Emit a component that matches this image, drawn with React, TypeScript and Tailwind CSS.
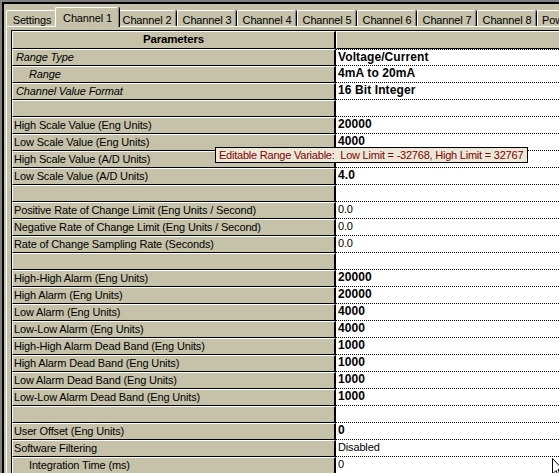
import React from 'react';

type Row = { label: string; value?: string; bold?: boolean; italic?: boolean; indent?: boolean };

const rows: Row[] = [
  { label: 'Range Type', value: 'Voltage/Current', bold: true, italic: true },
  { label: 'Range', value: '4mA to 20mA', bold: true, italic: true, indent: true },
  { label: 'Channel Value Format', value: '16 Bit Integer', bold: true, italic: true },
  { label: '' },
  { label: 'High Scale Value (Eng Units)', value: '20000', bold: true },
  { label: 'Low Scale Value (Eng Units)', value: '4000', bold: true },
  { label: 'High Scale Value (A/D Units)', value: '20.0', bold: true },
  { label: 'Low Scale Value (A/D Units)', value: '4.0', bold: true },
  { label: '' },
  { label: 'Positive Rate of Change Limit (Eng Units / Second)', value: '0.0' },
  { label: 'Negative Rate of Change Limit (Eng Units / Second)', value: '0.0' },
  { label: 'Rate of Change Sampling Rate (Seconds)', value: '0.0' },
  { label: '' },
  { label: 'High-High Alarm (Eng Units)', value: '20000', bold: true },
  { label: 'High Alarm (Eng Units)', value: '20000', bold: true },
  { label: 'Low Alarm (Eng Units)', value: '4000', bold: true },
  { label: 'Low-Low Alarm (Eng Units)', value: '4000', bold: true },
  { label: 'High-High Alarm Dead Band (Eng Units)', value: '1000', bold: true },
  { label: 'High Alarm Dead Band (Eng Units)', value: '1000', bold: true },
  { label: 'Low Alarm Dead Band (Eng Units)', value: '1000', bold: true },
  { label: 'Low-Low Alarm Dead Band (Eng Units)', value: '1000', bold: true },
  { label: '' },
  { label: 'User Offset (Eng Units)', value: '0', bold: true },
  { label: 'Software Filtering', value: 'Disabled' },
  { label: 'Integration Time (ms)', value: '0', indent: true },
];

const tabs = ['Settings', 'Channel 1', 'Channel 2', 'Channel 3', 'Channel 4', 'Channel 5', 'Channel 6', 'Channel 7', 'Channel 8', 'Power'];

const Tab = ({ name }: { name: string }) => {
  if (name === 'Channel 1') {
    return (
      <div className="relative z-10 -mx-[2px] -mb-[1px] h-[20px] w-[64px] shrink-0 rounded-t-[2px] border-t border-l border-white bg-[#c5c2a9] pt-[2px] text-center shadow-[inset_-1px_0_0_#808080,1px_0_0_#000]">
        {name}
      </div>
    );
  }
  if (name === 'Power') {
    return (
      <div className="h-[16px] w-[50px] shrink-0 rounded-t-[2px] border-t border-l border-white pl-[4px] pt-[1px] shadow-[inset_-1px_0_0_#808080,1px_0_0_#000]">
        {name}
      </div>
    );
  }
  return (
    <div
      className={`h-[16px] shrink-0 rounded-t-[2px] border-t border-l border-white pt-[1px] text-center shadow-[inset_-1px_0_0_#808080,1px_0_0_#000] ${
        name === 'Settings' ? 'w-[51px]' : 'w-[59px] mr-[1px]'
      }`}
    >
      {name}
    </div>
  );
};

export default function App() {
  return (
    <div className="relative h-[473px] w-[559px] overflow-hidden bg-[#c5c2a9] font-['Liberation_Sans',Arial,sans-serif] text-[11px] tracking-[-0.15px] text-black">
      <div className="h-full border-t-2 border-l-2 border-[#808080]">
        <div className="h-full border-t-2 border-l-2 border-black pt-[3px] pl-[2px]">
          {/* tab strip */}
          <div className="flex h-[19px] items-end">
            {tabs.map((t) => (
              <Tab key={t} name={t} />
            ))}
          </div>

          {/* tab page */}
          <div className="border-t border-l border-white pt-[3px] pl-[4px]">
            <div className="w-[640px] border-t border-l border-black">
              <div className="flex">
                <div className="h-[18px] w-[324px] border-b border-l border-t border-r-2 border-b-black border-l-white border-t-white border-r-black text-center text-[11.5px] font-bold leading-[15px]">
                  Parameters
                </div>
                <div className="h-[18px] flex-1 border-t border-l border-b border-t-white border-l-white border-b-black" />
              </div>

              {rows.map((r, i) => (
                <div key={i} className="flex">
                  <div
                    className={`h-[17px] w-[324px] whitespace-pre border-t border-l border-b border-r-2 border-t-white border-l-white border-b-black border-r-black leading-[15px] ${
                      r.indent ? 'pl-[16px]' : r.italic ? 'pl-[3px]' : 'pl-[1px]'
                    } ${r.italic ? 'italic' : ''}`}
                  >
                    {r.label}
                  </div>
                  <div
                    className={`h-[17px] flex-1 whitespace-pre border-b border-dotted border-black bg-white pl-[2px] leading-[15px] ${
                      i === 0 ? 'border-t' : ''
                    } ${r.bold ? 'text-[12px] font-bold tracking-[0.1px]' : ''}`}
                  >
                    {r.value ?? ''}
                  </div>
                </div>
              ))}
            </div>
          </div>
        </div>
      </div>

      {/* tooltip */}
      <div className="absolute left-[215px] top-[147px] h-[16px] w-[313px] whitespace-pre border border-black bg-[#ebe8d8] pl-[3px] leading-[14px] tracking-[-0.22px] text-[#800000]">
        Editable Range Variable:  Low Limit = -32768, High Limit = 32767
      </div>

      {/* mouse pointer */}
      <svg className="absolute left-[552px] top-[458px]" width="12" height="19" viewBox="0 0 12 19">
        <path d="M0.5 0.5 L0.5 16 L4 12.5 L6.5 18 L8.5 17 L6 11.5 L11 11.5 Z" fill="#fff" stroke="#000" strokeWidth="1" />
      </svg>
    </div>
  );
}
